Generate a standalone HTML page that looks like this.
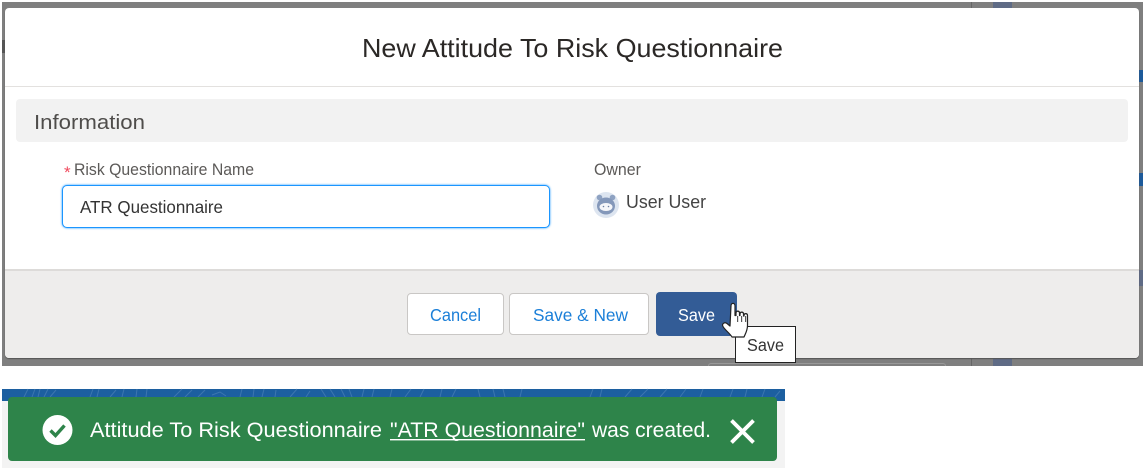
<!DOCTYPE html>
<html lang="en"><head><meta charset="utf-8"><title>New Attitude To Risk Questionnaire</title>
<style>
html,body{margin:0;padding:0;background:#fff}
body{position:relative;width:1146px;height:468px;overflow:hidden;font-family:"Liberation Sans",sans-serif}
#w{position:absolute;left:0;top:0;width:1146px;height:468px;filter:blur(.35px)}
.a{position:absolute;box-sizing:border-box}
svg{position:absolute;left:0;top:0}
svg text{font-family:"Liberation Sans",sans-serif}
</style></head><body><div id="w">
<div class="a" style="left:2px;top:2px;width:1141px;height:364px;background:#7f7f7f"></div>
<div class="a" style="left:993px;top:2px;width:19px;height:6px;background:#5f6b85"></div>
<div class="a" style="left:993px;top:358px;width:19px;height:8px;background:#5f6b85"></div>
<div class="a" style="left:971px;top:2px;width:1px;height:6px;background:#666"></div>
<div class="a" style="left:971px;top:358px;width:1px;height:8px;background:#666"></div>
<div class="a" style="left:2px;top:40px;width:3px;height:13px;background:#555"></div>
<div class="a" style="left:1139px;top:70px;width:4px;height:12px;background:#1d5a9a"></div>
<div class="a" style="left:1139px;top:173px;width:4px;height:13px;background:#1d5a9a"></div>
<div class="a" style="left:1139px;top:270px;width:4px;height:16px;background:#5f6b85"></div>
<div class="a" style="left:708px;top:363px;width:238px;height:3px;border:1px solid #999;border-bottom:0;border-radius:3px 3px 0 0"></div>

<div class="a" style="left:5px;top:8px;width:1134px;height:350px;background:#fff;border-radius:4px;box-shadow:0 1px 1px #555">
  <div class="a" style="left:0;top:78px;width:100%;height:1px;background:#e3e1df"></div>
  <div class="a" style="left:11px;top:91px;width:1112px;height:43px;background:#f2f2f2;border-radius:4px"></div>
  <div class="a" style="left:57px;top:177px;width:488px;height:43px;background:#fff;border:1.5px solid #1b96ff;border-radius:5px;box-shadow:0 0 2px #1b96ff"></div>
  <div class="a" style="left:0;top:261px;width:100%;height:89px;background:#eeedec;border-top:2px solid #dddbd9;border-radius:0 0 4px 4px"></div>
  <div class="a" style="left:402px;top:285px;width:97px;height:42px;background:#fff;border:1px solid #c9c7c5;border-radius:4px"></div>
  <div class="a" style="left:504px;top:285px;width:140px;height:42px;background:#fff;border:1px solid #c9c7c5;border-radius:4px"></div>
  <div class="a" style="left:651px;top:284px;width:81px;height:44px;background:#335c96;border-radius:4px"></div>
</div>
<div class="a" style="left:735px;top:326px;width:61px;height:37px;background:#fff;border:1px solid #222"></div>

<div class="a" style="left:2px;top:389px;width:783px;height:79px;background:#f3f3f3"></div>
<div class="a" style="left:2px;top:389px;width:783px;height:12px;background:#1c5fa0"></div>
<svg width="1146" height="468" viewBox="0 0 1146 468">
  <g fill="none" stroke="#4a80b5" stroke-width="1" opacity=".7">
    <path d="M24 397l4-8M32 397l3-8M38 397l2-8M44 397l4-8M50 397l6-7M90 397l3-8M97 397l2-8M110 397l6-7M122 397l2-8M136 397l1-8M146 397l1-8M174 397l8-8M185 397l7-7M198 397l7-7M212 395l8-3 6 4M240 397l2-8M253 397l1-8M262 397l2-8M275 397l1-7M290 397l7-8M310 391l-4 6M326 397l-5-8M335 397l-5-8M345 397l-4-8M352 397l-3-8M362 397l2-8M372 397l2-8M390 397l2-8M405 397l6-8M420 397l4-8M440 397l2-8M452 397l4-8M480 397l-2-8M495 397l-2-8M505 397l-2-8M520 397l2-8M590 397l3-8M600 397l2-8M625 397l7-8M640 397l8-8M660 397l7-8M680 397l6-8M700 397l3-8M730 397l3-8M745 397l2-8M762 397l3-8M775 397l5-6"/>
  </g>
  <text x="362" y="57" font-size="26" fill="#2b2826" textLength="421" lengthAdjust="spacingAndGlyphs">New Attitude To Risk Questionnaire</text>
  <text x="34" y="129" font-size="20" fill="#4f4d4b" textLength="111" lengthAdjust="spacingAndGlyphs">Information</text>
  <text x="64" y="178" font-size="17" fill="#f04a5e">*</text>
  <text x="74" y="175" font-size="16.5" fill="#5c5a58" textLength="180" lengthAdjust="spacingAndGlyphs">Risk Questionnaire Name</text>
  <text x="80" y="213" font-size="17.5" fill="#333" textLength="143" lengthAdjust="spacingAndGlyphs">ATR Questionnaire</text>
  <text x="594" y="175" font-size="16.5" fill="#5c5a58" textLength="47" lengthAdjust="spacingAndGlyphs">Owner</text>
  <text x="626" y="208" font-size="18.5" fill="#444" textLength="80" lengthAdjust="spacingAndGlyphs">User User</text>
  <text x="430" y="321" font-size="17.5" fill="#1b7fd8" textLength="51" lengthAdjust="spacingAndGlyphs">Cancel</text>
  <text x="533" y="321" font-size="17.5" fill="#1b7fd8" textLength="95" lengthAdjust="spacingAndGlyphs">Save &amp; New</text>
  <text x="678" y="321" font-size="17.5" fill="#fff" textLength="37" lengthAdjust="spacingAndGlyphs">Save</text>
  <text x="747" y="351" font-size="17.5" fill="#333" textLength="37" lengthAdjust="spacingAndGlyphs">Save</text>

  <!-- owner avatar -->
  <circle cx="606" cy="205" r="13" fill="#dde5f0"/>
  <circle cx="599.500" cy="197.500" r="2.800" fill="#8ea2c2"/><circle cx="612.500" cy="197.500" r="2.800" fill="#8ea2c2"/>
  <ellipse cx="606" cy="206" rx="9" ry="8.500" fill="#8498ba"/>
  <ellipse cx="606" cy="207" rx="6.500" ry="4" fill="#f5f6f9"/>
  <circle cx="603.500" cy="206.500" r=".8" fill="#6d80a3"/><circle cx="608.500" cy="206.500" r=".8" fill="#6d80a3"/>

  <!-- hand cursor -->
  <path d="M731 306c0-3.500 4-3.500 4 0v9.500h1v-2.500c0-2.500 3.500-2.500 3.500 0v2.500h.5v-1.500c0-2.500 3.500-2.500 3.500 0v2h.5v-.5c0-2.500 3.500-2.500 3.500 0v10c0 5-2 8-3.500 11.500h-12c-2-3.500-7-7-9-10.500-1.500-2.500 1.500-5 4-3l3 2.500z" fill="#fff" stroke="#222" stroke-width="1.200" stroke-linejoin="round"/>
  <path d="M737.700 316v6M741.700 316v6M745.700 316v6" stroke="#222" stroke-width=".9"/>

  <!-- toast -->
  <rect x="8" y="397" width="769" height="64" rx="4" fill="#2e844a"/>
  <circle cx="57.500" cy="430" r="15" fill="#fff"/>
  <path d="M50.500 430.500l5 5 9-10" fill="none" stroke="#2e844a" stroke-width="3.400"/>
  <text x="90" y="437" font-size="21" fill="#fff" textLength="292" lengthAdjust="spacingAndGlyphs">Attitude To Risk Questionnaire</text>
  <text x="390" y="437" font-size="21" fill="#fff" textLength="195" lengthAdjust="spacingAndGlyphs">"ATR Questionnaire"</text>
  <rect x="390" y="439" width="195" height="1.400" fill="#fff"/>
  <text x="592" y="437" font-size="21" fill="#fff" textLength="119" lengthAdjust="spacingAndGlyphs">was created.</text>
  <path d="M731.500 420.500l22 22M753.500 420.500l-22 22" stroke="#fff" stroke-width="3.800" fill="none"/>
</svg>
</div></body></html>
